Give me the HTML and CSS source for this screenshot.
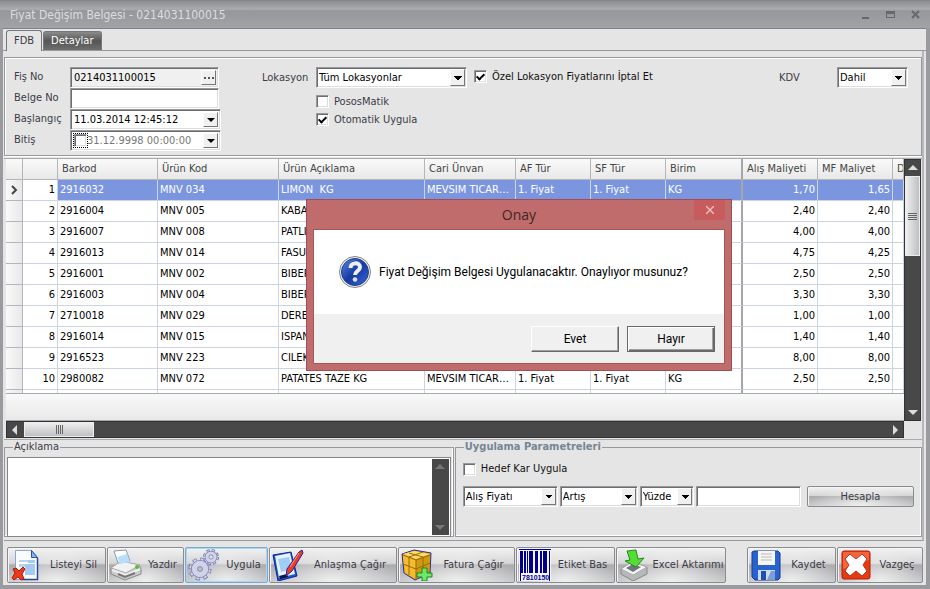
FILE: index.html
```html
<!DOCTYPE html>
<html lang="tr">
<head>
    <meta charset="UTF-8">
    <meta name="viewport" content="width=device-width, initial-scale=1.0">
    <title>Fiyat Değişim Belgesi</title>
    <link rel="stylesheet" href="styles.css">
</head>
<body>
    <header class="titlebar">
        <h1>Fiyat Değişim Belgesi - 0214031100015</h1>
        <div class="window-buttons">
            <button type="button" aria-label="Simge durumuna küçült"><svg width="9" height="9"><path d="M1 7h7v2H1z" fill="#66686c"/></svg></button>
            <button type="button" aria-label="Ekranı kapla"><svg width="9" height="9"><path d="M0 1h9v7H0zM1 4v3h7V4z" fill="#66686c" fill-rule="evenodd"/></svg></button>
            <button type="button" aria-label="Kapat"><svg width="9" height="9"><path d="M1 1l7 7M8 1L1 8" stroke="#66686c" stroke-width="2"/></svg></button>
        </div>
    </header>

    <main class="window">
        <nav class="tabs">
            <button type="button" class="tab active">FDB</button>
            <button type="button" class="tab">Detaylar</button>
        </nav>

        <div class="page">
            <!-- Document header fields -->
            <form class="panel">
                <div class="fields">
                    <label for="fisNo">Fiş No</label>
                    <div class="field gray"><input type="text" id="fisNo" value="0214031100015"><button type="button" class="drop" aria-label="Seç"><svg width="10" height="2"><path d="M0 0h2v2H0zM4 0h2v2H4zM8 0h2v2H8z" fill="#555"/></svg></button></div>
                    <label for="belgeNo">Belge No</label>
                    <div class="field"><input type="text" id="belgeNo"></div>
                    <label for="baslangic">Başlangıç</label>
                    <div class="field wide"><input type="text" id="baslangic" value="11.03.2014 12:45:12"><button type="button" class="drop" aria-label="Tarih seç"><i class="arrow"></i></button></div>
                    <label for="bitis">Bitiş</label>
                    <div class="field wide off"><input type="checkbox" class="focused" aria-label="Bitiş tarihi kullan"><input type="text" id="bitis" value="31.12.9998 00:00:00"><button type="button" class="drop" aria-label="Tarih seç"><i class="arrow"></i></button></div>
                </div>
                <div class="location">
                    <label for="lokasyon">Lokasyon</label>
                    <div class="combo combo-location"><select id="lokasyon"><option>Tüm Lokasyonlar</option></select></div>
                    <label class="check dark"><input type="checkbox" checked>Özel Lokasyon Fiyatlarını İptal Et</label>
                    <label class="check second"><input type="checkbox">PososMatik</label>
                    <label class="check second"><input type="checkbox" checked>Otomatik Uygula</label>
                </div>
                <div class="vat">
                    <label for="kdv">KDV</label>
                    <div class="combo combo-vat"><select id="kdv"><option>Dahil</option></select></div>
                </div>
            </form>

            <!-- Price list -->
            <section class="grid">
                <div class="grid-body">
                    <table id="priceTable">
                        <colgroup>
                            <col class="c-mark"><col class="c-no"><col class="c-barcode"><col class="c-code"><col class="c-name"><col class="c-firm">
                            <col class="c-price"><col class="c-price"><col class="c-unit"><col class="c-price"><col class="c-price"><col>
                        </colgroup>
                        <thead>
                            <tr>
                                <th></th>
                                <th></th>
                                <th>Barkod</th>
                                <th>Ürün Kod</th>
                                <th>Ürün Açıklama</th>
                                <th>Cari Ünvan</th>
                                <th>AF Tür</th>
                                <th>SF Tür</th>
                                <th class="fixed">Birim</th>
                                <th>Alış Maliyeti</th>
                                <th>MF Maliyet</th>
                                <th>D</th>
                            </tr>
                        </thead>
                        <tbody></tbody>
                    </table>
                </div>
                <div class="grid-footer"></div>
                <div class="scroll vertical">
                    <button type="button" aria-label="Yukarı"><i class="tri up"></i></button>
                    <div class="thumb"></div>
                    <button type="button" aria-label="Aşağı"><i class="tri down"></i></button>
                </div>
                <div class="scroll horizontal">
                    <button type="button" aria-label="Sola"><i class="tri left"></i></button>
                    <div class="thumb"></div>
                    <button type="button" aria-label="Sağa"><i class="tri right"></i></button>
                </div>
            </section>

            <div class="bottom">
                <fieldset class="notes">
                    <legend><label for="aciklama">Açıklama</label></legend>
                    <div class="notes-box">
                        <textarea id="aciklama"></textarea>
                        <div class="notes-scroll"><i class="tri up"></i><i class="tri down"></i></div>
                    </div>
                </fieldset>
                <fieldset class="params">
                    <legend>Uygulama Parametreleri</legend>
                    <label class="check dark"><input type="checkbox">Hedef Kar Uygula</label>
                    <div class="params-row">
                        <div class="combo combo-base"><select aria-label="Fiyat"><option>Alış Fiyatı</option></select></div>
                        <div class="combo combo-type"><select aria-label="İşlem"><option>Artış</option></select></div>
                        <div class="combo combo-unit"><select aria-label="Birim"><option>Yüzde</option></select></div>
                        <div class="field"><input type="text" aria-label="Değer"></div>
                        <button type="button" class="glossy calc">Hesapla</button>
                    </div>
                </fieldset>
            </div>
        </div>

        <footer class="toolbar">
            <button type="button" class="glossy b-delete">
                <svg width="32" height="32" viewBox="0 0 32 32"><path d="M5.500 1.500h16l6 7v22h-22z" fill="#fafcff" stroke="#8ea6d4"/><path d="M21.500 1.500v7h6z" fill="#7db8f0" stroke="#2d4f9d"/><path d="M27.500 9v21.500h-15" fill="none" stroke="#27479a" stroke-width="1.500"/><path d="M9 11h9v2H9zM9 15h7v3H9z" fill="#b9d4f3"/><path d="M15 15h10v11H15zM18 11h7v3h-7z" fill="#a5cbf3"/><path d="M3 20l3-1 3 3 4-4 2 2-3 5 2 5-3 1-3-3-4 3-2-2 3-5z" fill="#ee3a1c" stroke="#a51c0c"/></svg>
                <span>Listeyi Sil</span>
            </button>
            <button type="button" class="glossy b-print">
                <svg width="32" height="32" viewBox="0 0 32 32"><path d="M1 19l9-6 19 3 2 4v5l-16 6-14-6z" fill="#c9cbcd" stroke="#888"/><path d="M1 19l10-7 19 4-14 8z" fill="#f1f1f2" stroke="#aaa"/><path d="M4 2l12-1 4 11-12 2z" fill="#fff" stroke="#8b9aa8"/><path d="M7 8l10-3 3 8-10 2z" fill="#b5dffa"/><path d="M2 21l14 5 14-6" fill="none" stroke="#eee" stroke-width="2"/><path d="M8 25l7 3 10-4" fill="none" stroke="#777" stroke-width="2"/><circle cx="27" cy="18" r="2" fill="#4cc42c"/></svg>
                <span>Yazdır</span>
            </button>
            <button type="button" class="glossy b-apply hot">
                <svg width="32" height="32" viewBox="0 0 32 32"><g fill="none"><circle cx="12" cy="20" r="9.500" stroke="#6b72a5" stroke-width="4" stroke-dasharray="4 3.460"/><circle cx="12" cy="20" r="9.500" stroke="#d0d3ea" stroke-width="2.500" stroke-dasharray="3 4.460" stroke-dashoffset="-0.500"/><circle cx="12" cy="20" r="5.500" stroke="#7a80b0" stroke-width="7"/><circle cx="12" cy="20" r="5.500" stroke="#d0d3ea" stroke-width="5.500"/><circle cx="23" cy="8" r="6.500" stroke="#6b72a5" stroke-width="3" stroke-dasharray="3 2.100"/><circle cx="23" cy="8" r="6.500" stroke="#d0d3ea" stroke-width="1.500" stroke-dasharray="2 3.100" stroke-dashoffset="-0.500"/><circle cx="23" cy="8" r="4" stroke="#7a80b0" stroke-width="4.500"/><circle cx="23" cy="8" r="4" stroke="#d0d3ea" stroke-width="3.200"/></g></svg>
                <span>Uygula</span>
            </button>
            <button type="button" class="glossy b-deal">
                <svg width="32" height="32" viewBox="0 0 32 32"><path d="M1 6l18-3 6 24-19 5z" fill="#1c57c4" stroke="#1020a0"/><path d="M3 7l15-3 5 21-16 4z" fill="#e4f3ff"/><path d="M6 10l11-2 3 12-11 3z" fill="#9fcdf3"/><path d="M7 27l8-2 1 3-8 2z" fill="#0b1648"/><path d="M27 3l3-2 1 3-11 18-6 5 1-7z" fill="#ef3b1f" stroke="#2423a5"/><path d="M27 4l-9 14" stroke="#ff9b80"/></svg>
                <span>Anlaşma Çağır</span>
            </button>
            <button type="button" class="glossy b-invoice">
                <svg width="32" height="32" viewBox="0 0 32 32"><path d="M1 5l12-4 17 3-1 20-15 7L3 24z" fill="#e5a80f" stroke="#262aa0"/><path d="M2 5l11-3 16 3-14 5z" fill="#ffdc68"/><path d="M2 6l13 5v19L4 24z" fill="#f3bc2c"/><path d="M15 11l14-5-1 18-13 6z" fill="#d09a10"/><path d="M2 6l13 5 14-5M15 11v19M8 4l14 4v18M22 3L8 8v18M2 15l13 5 14-6" fill="none" stroke="#96690a"/><path d="M21 19h5v5h5v4h-5v4h-5v-4h-5v-4h5z" fill="#70e866" stroke="#16882a"/></svg>
                <span>Fatura Çağır</span>
            </button>
            <button type="button" class="glossy b-label">
                <svg width="32" height="32" viewBox="0 0 32 32"><path d="M0 0h32v32H0z" fill="#f4f5ff"/><path d="M0 0h32v1H0zM1 2h3v22H1zM5 2h2v22H5zM8 2h1v22H8zM10 2h4v22h-4zM16 2h3v22h-3zM21 2h2v22h-2zM24 2h4v22h-4zM30 2h1v30h-1zM1 24h1v8H1z" fill="#00008b"/><text x="3" y="31" class="barcode-text">7810150</text></svg>
                <span>Etiket Bas</span>
            </button>
            <button type="button" class="glossy b-excel">
                <svg width="32" height="32" viewBox="0 0 32 32"><path d="M2 20l11-7 15 5v7l-14 7-12-7z" fill="#b6b8ba" stroke="#888"/><path d="M2 20l11-7 15 5-14 8z" fill="#f5f5f5" stroke="#aaa"/><path d="M7 19l7-4 8 3-8 5z" fill="#73777a"/><path d="M8 2l9-1 2 9 6-1-8 9-11-6 5-1z" fill="#55dd36" stroke="#238a1d"/></svg>
                <span>Excel Aktarımı</span>
            </button>
            <button type="button" class="glossy b-save">
                <svg width="32" height="32" viewBox="0 0 32 32"><path d="M2 3l2-1h24l2 2v25l-2 2H5l-3-3z" fill="#2862cf" stroke="#153b91"/><path d="M8 2h17v14H8z" fill="#f5f5f3"/><path d="M11 5h11M11 8h11M11 11h11" stroke="#bbb"/><path d="M8 21h17v10H8z" fill="#cbdcf2"/><path d="M11 22h5v9h-5z" fill="#1e4eae"/><path d="M21 22h4v9h-8z" fill="#7f9dce"/></svg>
                <span>Kaydet</span>
            </button>
            <button type="button" class="glossy b-cancel">
                <svg width="32" height="32" viewBox="0 0 32 32"><rect x="2" y="2" width="28" height="28" rx="2" fill="#e83a10" stroke="#b61b05"/><path d="M3 3h26v8L3 20z" fill="#ff8058" opacity=".6"/><path d="M10 5l6 5 6-5 5 5-4 6 4 6-5 5-6-5-6 5-5-5 4-6-4-6z" fill="#fff" stroke="#b6351d"/></svg>
                <span>Vazgeç</span>
            </button>
        </footer>
    </main>

    <!-- Confirmation dialog -->
    <div class="dialog" role="dialog" aria-labelledby="dialogTitle">
        <div class="dialog-title">
            <h2 id="dialogTitle">Onay</h2>
            <button type="button" class="dialog-close" aria-label="Kapat"><svg width="8" height="8"><path d="M0 0l8 8M8 0L0 8" stroke="#eebcbc" stroke-width="1.500"/></svg></button>
        </div>
        <div class="dialog-content">
            <div class="dialog-message">
                <svg width="32" height="32" viewBox="0 0 32 32"><defs><linearGradient id="ball" x1="0" y1="0" x2="1" y2="1"><stop offset="0" stop-color="#5b8be6"/><stop offset=".5" stop-color="#143b9e"/><stop offset="1" stop-color="#3e66dc"/></linearGradient></defs><circle cx="16" cy="16" r="15.500" fill="#eee" stroke="#858585"/><circle cx="16" cy="16" r="13.500" fill="url(#ball)" stroke="#203e91"/><path d="M11.500 12c0-6 9.500-6 9.500-1 0 4-5 4-5 8" fill="none" stroke="#eef0f6" stroke-width="4"/><circle cx="16" cy="23.500" r="2.300" fill="#dde1ee"/></svg>
                <p>Fiyat Değişim Belgesi Uygulanacaktır. Onaylıyor musunuz?</p>
            </div>
            <div class="dialog-buttons">
                <button type="button">Evet</button>
                <button type="button" class="default">Hayır</button>
            </div>
        </div>
    </div>

    <script src="script.js"></script>
</body>
</html>
```

FILE: styles.css
```css
*, *::after {
    box-sizing: border-box;
}
body {
    margin: 0;
    height: 100vh;
    display: flex;
    flex-direction: column;
    padding: 0 4px 4px 3px;
    background-color: #9a9b9f;
    font-family: "DejaVu Sans Condensed", Tahoma, sans-serif;
    font-size: 11px;
    line-height: 14px;
    color: #3c3c46;
}
button, input, select, textarea {
    font: inherit;
    color: inherit;
    margin: 0;
}
button {
    padding: 0;
    border: none;
    background: none;
}
svg {
    display: block;
    flex: none;
}

/* Title bar */
.titlebar {
    flex: none;
    height: 28px;
    display: flex;
    align-items: center;
    justify-content: space-between;
    margin: 0 -4px 0 -3px;
    padding: 0 10px;
    background: linear-gradient(#8d8e92, #aaabaf 8px, #96979a 10px, #a2a3a7);
    border-top: 1px solid #86878b;
}
h1 {
    margin: 0;
    font-size: 12px;
    font-weight: normal;
    color: #dcdde0;
}
.window-buttons {
    display: flex;
    gap: 16px;
}

.window {
    flex: 1;
    min-height: 0;
    display: flex;
    flex-direction: column;
    background-color: #e5e5e5;
    border-top: 1px solid #808184;
}

/* Tabs */
.tabs {
    flex: none;
    display: flex;
    align-items: flex-end;
    gap: 1px;
    height: 22px;
    padding: 0 3px;
    border-bottom: 1px solid #98999c;
}
.tab {
    height: 19px;
    padding: 0 7px;
    border: 1px solid #77787b;
    border-bottom: none;
    border-radius: 3px 3px 0 0;
    background: linear-gradient(#8b8b8b, #555 50%, #6e6e6e);
    color: #fff;
}
.tab.active {
    height: 21px;
    margin-bottom: -1px;
    background: #e5e5e5;
    color: #3c3c46;
}
.page {
    flex: 1;
    min-height: 0;
    display: flex;
    flex-direction: column;
    margin: 0 2px 0 1px;
    padding: 6px 0 2px 0;
    border-right: 2px solid #b6b7ba;
    border-bottom: 1px solid #98999c;
}

/* Document fields */
.panel {
    flex: none;
    display: flex;
    align-items: flex-start;
    height: 99px;
    padding: 9px 13px 0 9px;
    border: 1px solid #98999c;
    box-shadow: inset 1px 1px #fff, 0 1px #fff;
}
.fields {
    display: grid;
    grid-template-columns: 56px 151px;
    grid-auto-rows: 21px;
}
.fields > label {
    padding-top: 3px;
}
.field, .combo {
    position: relative;
    display: flex;
    height: 21px;
    padding: 2px;
    background-color: #fff;
    border: 1px solid;
    border-color: #98999c #fff #fff #98999c;
    box-shadow: inset 1px 1px #6c6d70, inset -1px -1px #ddd;
}
.fields .field {
    width: 149px;
}
.fields .field.wide {
    width: 151px;
}
.field.gray {
    background-color: #f0f0f0;
}
.field input[type="text"] {
    flex: 1;
    min-width: 0;
    width: 0;
    padding: 0 0 0 1px;
    border: none;
    outline: none;
    background: none;
    color: #000;
}
.field.off input[type="text"] {
    padding: 0;
    color: #777;
}
.drop, .combo::after {
    flex: none;
    width: 15px;
    border: 1px solid;
    border-color: #fff #777 #777 #fff;
    background-color: #f0f0f0;
}
.drop {
    display: flex;
    align-items: center;
    justify-content: center;
}
.arrow {
    border: 4px solid transparent;
    border-top-color: #000;
    border-bottom: none;
}
.combo::after {
    content: "";
    position: absolute;
    top: 1px;
    right: 1px;
    bottom: 1px;
    background-image: linear-gradient(to top right, transparent 50%, #000 50%), linear-gradient(to top left, transparent 50%, #000 50%);
    background-size: 4px 4px;
    background-position: 3px 6px, 7px 6px;
    background-repeat: no-repeat;
    pointer-events: none;
}
select {
    appearance: none;
    width: 100%;
    padding: 0;
    border: none;
    outline: none;
    background: none;
    color: #000;
}
input[type="checkbox"] {
    appearance: none;
    flex: none;
    position: relative;
    width: 13px;
    height: 13px;
    background-color: #fff;
    border: 1px solid;
    border-color: #98999c #fff #fff #98999c;
    box-shadow: inset 1px 1px #6c6d70, inset -1px -1px #ddd;
}
input[type="checkbox"]:checked::after {
    content: "";
    position: absolute;
    left: 3px;
    top: 1px;
    width: 5px;
    height: 8px;
    border: solid #000;
    border-width: 0 2px 2px 0;
    transform: rotate(45deg);
}
input.focused {
    outline: 1px dotted #000;
    margin: 1px 0 0 1px;
}
.check {
    display: flex;
    align-items: center;
    gap: 5px;
}
.check.dark {
    color: #111;
}
.location {
    display: grid;
    grid-template-columns: 54px 151px auto;
    grid-template-rows: 25px 18px 18px;
    margin-left: 41px;
}
.location > label:first-child, .vat > label {
    padding-top: 4px;
}
.location .check {
    margin-left: 7px;
    height: 19px;
}
.location .check.second {
    grid-column: 2 / 4;
    margin-left: 0;
}
.vat {
    display: flex;
    justify-content: space-between;
    width: 129px;
    margin-left: auto;
}
.combo-vat {
    width: 71px;
}

/* Price grid */
.grid {
    flex: 1;
    min-height: 0;
    display: grid;
    grid-template-columns: 1fr 17px;
    grid-template-rows: 1fr 28px 17px;
    margin: 2px 0 0;
    padding: 0 1px 1px 2px;
    border: solid #a9aaad;
    border-width: 1px 0;
}
.grid-body {
    min-width: 0;
    min-height: 0;
    overflow: hidden;
    background-color: #fff;
}
.grid-footer {
    grid-column: 1;
    grid-row: 2;
    border: solid #a9aaad;
    border-width: 1px 0;
    background: linear-gradient(#f9f9f9, #e9e9e9);
}
table {
    width: 100%;
    table-layout: fixed;
    border-collapse: separate;
    border-spacing: 0;
}
.c-mark { width: 17px; }
.c-no { width: 35px; }
.c-barcode { width: 100px; }
.c-code { width: 121px; }
.c-name { width: 146px; }
.c-firm { width: 91px; }
.c-price { width: 75px; }
.c-unit { width: 77px; }
th, td {
    text-align: left;
    white-space: nowrap;
    overflow: hidden;
}
th {
    height: 21px;
    padding: 0 4px;
    font-weight: normal;
    color: #444;
    background: linear-gradient(#fafafa, #e8e8e8);
    border-right: 1px solid #b5b6b9;
    border-bottom: 1px solid #b5b6b9;
}
th:last-child {
    padding-right: 0;
}
td {
    height: 21px;
    padding: 0 2px;
    color: #000;
    text-overflow: ellipsis;
    border-right: 1px solid #ccd4e2;
    border-bottom: 1px solid #ccd4e2;
}
td:first-child {
    padding: 0 0 0 5px;
    background: linear-gradient(90deg, #f9f9f9, #e8e8e8);
    border-color: #b5b6b9;
}
td.number {
    text-align: right;
}
.fixed {
    border-right: 2px solid #a5a6a9;
}
tr.selected td:nth-child(n+3) {
    background-color: #7b96df;
    color: #fff;
}

/* Scroll bars */
.scroll {
    display: flex;
    background-color: #484848;
    border: 1px solid #303236;
}
.scroll button {
    flex: none;
    width: 15px;
    height: 15px;
    display: flex;
    align-items: center;
    justify-content: center;
}
.vertical {
    grid-column: 2;
    grid-row: 1 / 3;
    flex-direction: column;
}
.vertical button:last-child, .horizontal button:last-child {
    margin: auto 0 0 auto;
}
.horizontal {
    grid-column: 1;
    grid-row: 3;
}
.thumb {
    display: grid;
    place-items: center;
    border: 1px solid #eee;
}
.vertical .thumb {
    height: 80px;
    margin-top: 1px;
    background: linear-gradient(90deg, #eee, #bfc0c3);
}
.horizontal .thumb {
    width: 70px;
    margin-left: 2px;
    background: linear-gradient(#eee, #bfc0c3);
}
.thumb::after {
    content: "";
    width: 9px;
    height: 7px;
    background: repeating-linear-gradient(#666 0 1px, transparent 1px 2px);
}
.horizontal .thumb::after {
    width: 7px;
    height: 9px;
    background: repeating-linear-gradient(90deg, #666 0 1px, transparent 1px 2px);
}
.tri {
    border: 5px solid transparent;
}
.tri.up {
    border-top: none;
    border-bottom-color: #ddd;
}
.tri.down {
    border-bottom: none;
    border-top-color: #ddd;
}
.tri.left {
    border-left: none;
    border-right-color: #ddd;
}
.tri.right {
    border-right: none;
    border-left-color: #ddd;
}

/* Notes and parameters */
.bottom {
    flex: none;
    display: flex;
    gap: 1px;
    height: 98px;
    padding-bottom: 1px;
}
fieldset {
    min-width: 0;
    margin: 0;
    border: 1px solid #98999c;
    box-shadow: inset -1px -1px #fff;
}
legend {
    padding: 0 1px;
}
.notes {
    width: 49%;
    padding: 3px 2px 2px;
}
.notes legend {
    margin-left: 6px;
}
.notes-box {
    display: flex;
    height: 80px;
    border: 1px solid #85868a;
    background-color: #fff;
}
textarea {
    flex: 1;
    resize: none;
    border: none;
    outline: none;
}
.notes-scroll {
    width: 17px;
    margin: 1px;
    padding: 5px 0;
    display: flex;
    flex-direction: column;
    justify-content: space-between;
    align-items: center;
    background-color: #484848;
}
.notes-scroll .tri.up {
    border-bottom-color: #777;
}
.notes-scroll .tri.down {
    border-top-color: #777;
}
.params {
    flex: 1;
    padding: 0 7px;
}
.params legend {
    margin-left: 1px;
    font-weight: bold;
    color: #768694;
}
.params .check {
    height: 16px;
    margin-top: 7px;
}
.params-row {
    display: flex;
    gap: 2px;
    margin-top: 9px;
}
.params-row .field {
    flex: 1;
}
.combo-base { width: 95px; }
.combo-type { width: 78px; }
.combo-unit { width: 54px; }

.glossy {
    border: 1px solid #8a8b8e;
    border-radius: 2px;
    box-shadow: inset 1px 1px #f5f5f5;
    background: radial-gradient(ellipse at 50% 100%, rgba(255, 255, 255, .7), transparent 70%), linear-gradient(#f2f2f2, #d6d6d8 45%, #acacaf 50%, #ccccce);
}
.calc {
    width: 107px;
    height: 21px;
    margin-left: 4px;
}

/* Bottom toolbar */
.toolbar {
    flex: none;
    display: flex;
    gap: 1px;
    padding: 6px 3px 2px 4px;
}
.toolbar .glossy {
    display: flex;
    align-items: center;
    height: 36px;
    padding-left: 2px;
}
.toolbar span {
    flex: 1;
    white-space: nowrap;
}
.toolbar .hot {
    border-color: #7aa9cc;
    box-shadow: inset 0 0 0 1px #a5d6f5;
}
.b-delete { width: 99px; }
.b-print { width: 77px; }
.b-apply { width: 83px; }
.b-deal { width: 128px; }
.b-invoice { width: 117px; }
.b-label { width: 99px; }
.b-excel { width: 110px; }
.b-save { width: 89px; margin-left: auto; }
.b-cancel { width: 86px; }
.barcode-text {
    font-size: 7px;
    font-weight: bold;
    font-family: "Liberation Sans", sans-serif;
    fill: #00008b;
}

/* Confirmation dialog */
.dialog {
    position: absolute;
    left: 306px;
    top: 199px;
    width: 426px;
    padding: 0 6px 6px;
    background-color: #c06c6c;
    border: 1px solid #9c5053;
    color: #000;
}
.dialog-title {
    position: relative;
    height: 29px;
    display: flex;
    align-items: center;
    justify-content: center;
}
h2 {
    margin: 0;
    font-family: "Open Sans", sans-serif;
    font-size: 14px;
    font-weight: normal;
    color: #402626;
}
.dialog-close {
    position: absolute;
    right: 0;
    top: 0;
    width: 31px;
    height: 20px;
    display: flex;
    align-items: center;
    justify-content: center;
    background-color: #c75b5d;
}
.dialog-content {
    border: 1px solid #a85558;
    background-color: #f0f0f0;
    font-family: Roboto, sans-serif;
    font-size: 12px;
}
.dialog-message {
    display: flex;
    align-items: center;
    gap: 8px;
    height: 84px;
    padding-left: 25px;
    background-color: #fff;
}
.dialog-message p {
    margin: 0;
    white-space: nowrap;
}
.dialog-buttons {
    display: flex;
    justify-content: flex-end;
    gap: 8px;
    padding: 12px 9px 11px;
}
.dialog-buttons button {
    width: 88px;
    height: 26px;
    border: 1px solid;
    border-color: #fff #696969 #696969 #fff;
    box-shadow: inset -1px -1px #a0a0a0;
}
.dialog-buttons .default {
    border-color: #696969;
    box-shadow: inset 1px 1px #fff, inset -1px -1px #696969, inset -2px -2px #a0a0a0;
}
```

FILE: script.js
```js
const rows = [
    ['2916032', 'MNV 034', 'LIMON  KG', 'MEVSIM TICARET LTD', '1. Fiyat', '1. Fiyat', 'KG', '1,70', '1,65'],
    ['2916004', 'MNV 005', 'KABAK', '', '', '', '', '2,40', '2,40'],
    ['2916007', 'MNV 008', 'PATLICAN', '', '', '', '', '4,00', '4,00'],
    ['2916013', 'MNV 014', 'FASULYE', '', '', '', '', '4,75', '4,25'],
    ['2916001', 'MNV 002', 'BIBER', '', '', '', '', '2,50', '2,50'],
    ['2916003', 'MNV 004', 'BIBER', '', '', '', '', '3,30', '3,30'],
    ['2710018', 'MNV 029', 'DERE', '', '', '', '', '1,00', '1,00'],
    ['2916014', 'MNV 015', 'ISPANAK', '', '', '', '', '1,40', '1,40'],
    ['2916523', 'MNV 223', 'CILEK', '', '', '', '', '8,00', '8,00'],
    ['2980082', 'MNV 072', 'PATATES TAZE KG', 'MEVSIM TICARET LTD', '1. Fiyat', '1. Fiyat', 'KG', '2,50', '2,50']
];
const tableBody = document.querySelector('#priceTable tbody');

rows.forEach((item, index) => {
    const row = document.createElement('tr');
    if (index === 0) row.className = 'selected';
    row.innerHTML = `
        <td>${index === 0 ? '<svg width="7" height="10"><path d="M1 1l4 4-4 4" fill="none" stroke="#444" stroke-width="2"/></svg>' : ''}</td>
        <td class="number">${index + 1}</td>
        <td>${item[0]}</td>
        <td>${item[1]}</td>
        <td>${item[2].replace('  ', ' &nbsp;')}</td>
        <td>${item[3]}</td>
        <td>${item[4]}</td>
        <td>${item[5]}</td>
        <td class="fixed">${item[6]}</td>
        <td class="number">${item[7]}</td>
        <td class="number">${item[8]}</td>
        <td></td>
    `;
    tableBody.appendChild(row);
});

// Empty row that fills the space under the last record
tableBody.insertAdjacentHTML('beforeend', '<tr>' + '<td></td>'.repeat(8) + '<td class="fixed"></td>' + '<td></td>'.repeat(3) + '</tr>');
```
